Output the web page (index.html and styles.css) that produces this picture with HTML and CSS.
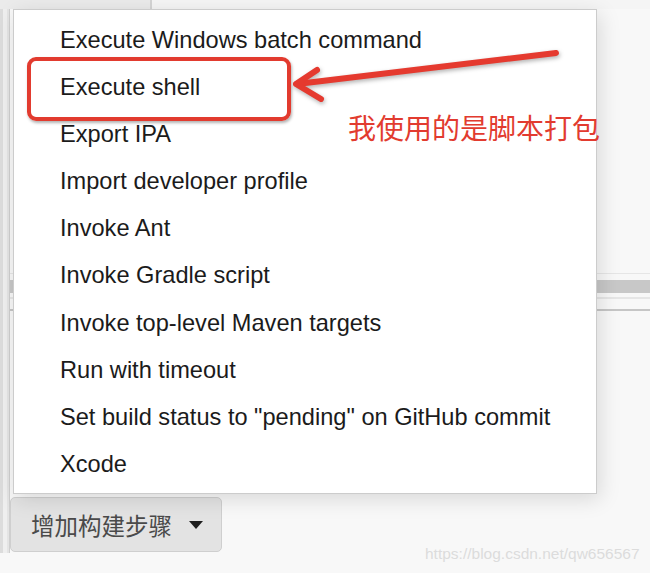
FILE: index.html
```html
<!DOCTYPE html>
<html lang="zh-CN">
<head>
    <meta charset="UTF-8">
    <title>增加构建步骤</title>
    <link rel="stylesheet" href="styles.css">
</head>
<body>
    <div class="page">
        <div class="topbar">
            <div class="tab-left"></div>
            <div class="tab-rest"></div>
        </div>

        <div class="main">
            <div class="side"></div>
            <div class="content">
                <div class="section">
                    <div class="rule light"></div>
                    <div class="rule bar"></div>
                    <div class="rule light second"></div>
                    <div class="rule dark"></div>
                </div>
                <button class="add-step">
                    <span>增加构建步骤</span>
                    <span class="caret"></span>
                </button>
            </div>
        </div>

        <!-- dropdown opened above the button -->
        <ul class="menu">
            <li>Execute Windows batch command</li>
            <li>Execute shell</li>
            <li>Export IPA</li>
            <li>Import developer profile</li>
            <li>Invoke Ant</li>
            <li>Invoke Gradle script</li>
            <li>Invoke top-level Maven targets</li>
            <li>Run with timeout</li>
            <li>Set build status to "pending" on GitHub commit</li>
            <li>Xcode</li>
        </ul>

        <!-- annotation -->
        <div class="mark-box"></div>
        <svg class="mark-arrow" width="650" height="150" viewBox="0 0 650 150">
            <path d="M556 53 L297 84" />
            <path d="M317 70 L296 84 L321 99" />
        </svg>
        <div class="mark-text">我使用的是脚本打包</div>

        <div class="watermark">https://blog.csdn.net/qw656567</div>
    </div>
</body>
</html>
```

FILE: styles.css
```css
body {
    margin: 0;
    background-color: #f8f8f8;
    font-family: "Liberation Sans", Arial, sans-serif;
}
.page {
    position: relative;
    width: 650px;
    height: 573px;
    overflow: hidden;
}
.topbar {
    display: flex;
    height: 9px;
}
.tab-left {
    width: 150px;
    background: #ebebeb;
    border-right: 2px solid #d4d4d4;
}
.tab-rest {
    flex: 1;
    background: #f5f5f5;
}
.main {
    display: flex;
    height: 544px;
}
.side {
    width: 9px;
    background: linear-gradient(to right, #dcdcdc 0, #dcdcdc 3px, #efefef 3px, #efefef 7px, #e4e4e4 7px);
    border-right: 1px solid #cfcfcf;
}
.content {
    flex: 1;
    display: flex;
    flex-direction: column;
}
.section {
    height: 488px;
    display: flex;
    flex-direction: column;
    padding-top: 264px;
    box-sizing: border-box;
}
.rule {
    height: 1px;
}
.rule.light {
    background: #e6e6e6;
}
.rule.bar {
    height: 13px;
    margin-top: 6px;
    background: #c8c8c8;
}
.rule.second {
    margin-top: 4px;
    height: 2px;
}
.rule.dark {
    margin-top: 10px;
    height: 2px;
    background: #c6c6c6;
}
.add-step {
    display: flex;
    align-items: center;
    width: 212px;
    height: 55px;
    padding: 0 0 0 20px;
    margin: 0;
    background: #e3e3e3;
    border: 1px solid #cfcfcf;
    border-radius: 5px;
    font-family: "Noto Sans CJK SC", sans-serif;
    font-size: 23.5px;
    color: #4a4a4a;
    box-sizing: border-box;
}
.caret {
    margin-left: 17px;
    width: 0;
    height: 0;
    border-left: 7px solid transparent;
    border-right: 7px solid transparent;
    border-top: 8px solid #1e1e1e;
}
.menu {
    position: absolute;
    left: 13px;
    top: 9px;
    width: 584px;
    margin: 0;
    padding: 7px 0 5px;
    list-style: none;
    background: #fff;
    border: 1px solid #cccccc;
    box-sizing: border-box;
    box-shadow: 3px 5px 20px rgba(0, 0, 0, 0.13);
}
.menu li {
    padding-left: 46px;
    height: 47.1px;
    line-height: 47px;
    font-size: 23.6px;
    color: #1b1b1b;
    white-space: nowrap;
}
.mark-box {
    position: absolute;
    left: 27px;
    top: 57px;
    width: 264px;
    height: 64px;
    box-sizing: border-box;
    border: 4px solid #e23b2f;
    border-radius: 9px;
    box-shadow: 1px 2px 3px rgba(0, 0, 0, 0.3);
}
.mark-arrow {
    position: absolute;
    left: 0;
    top: 0;
    filter: drop-shadow(1px 2px 2px rgba(0, 0, 0, 0.3));
}
.mark-arrow path {
    fill: none;
    stroke: #e53a2f;
    stroke-width: 6;
    stroke-linecap: round;
    stroke-linejoin: round;
}
.mark-text {
    position: absolute;
    left: 348px;
    top: 111px;
    font-family: "Noto Sans CJK SC", sans-serif;
    font-size: 28px;
    line-height: 32px;
    color: #e23b2f;
}
.watermark {
    position: absolute;
    left: 425px;
    top: 545px;
    font-size: 15.5px;
    color: #dcdcdc;
}
```
